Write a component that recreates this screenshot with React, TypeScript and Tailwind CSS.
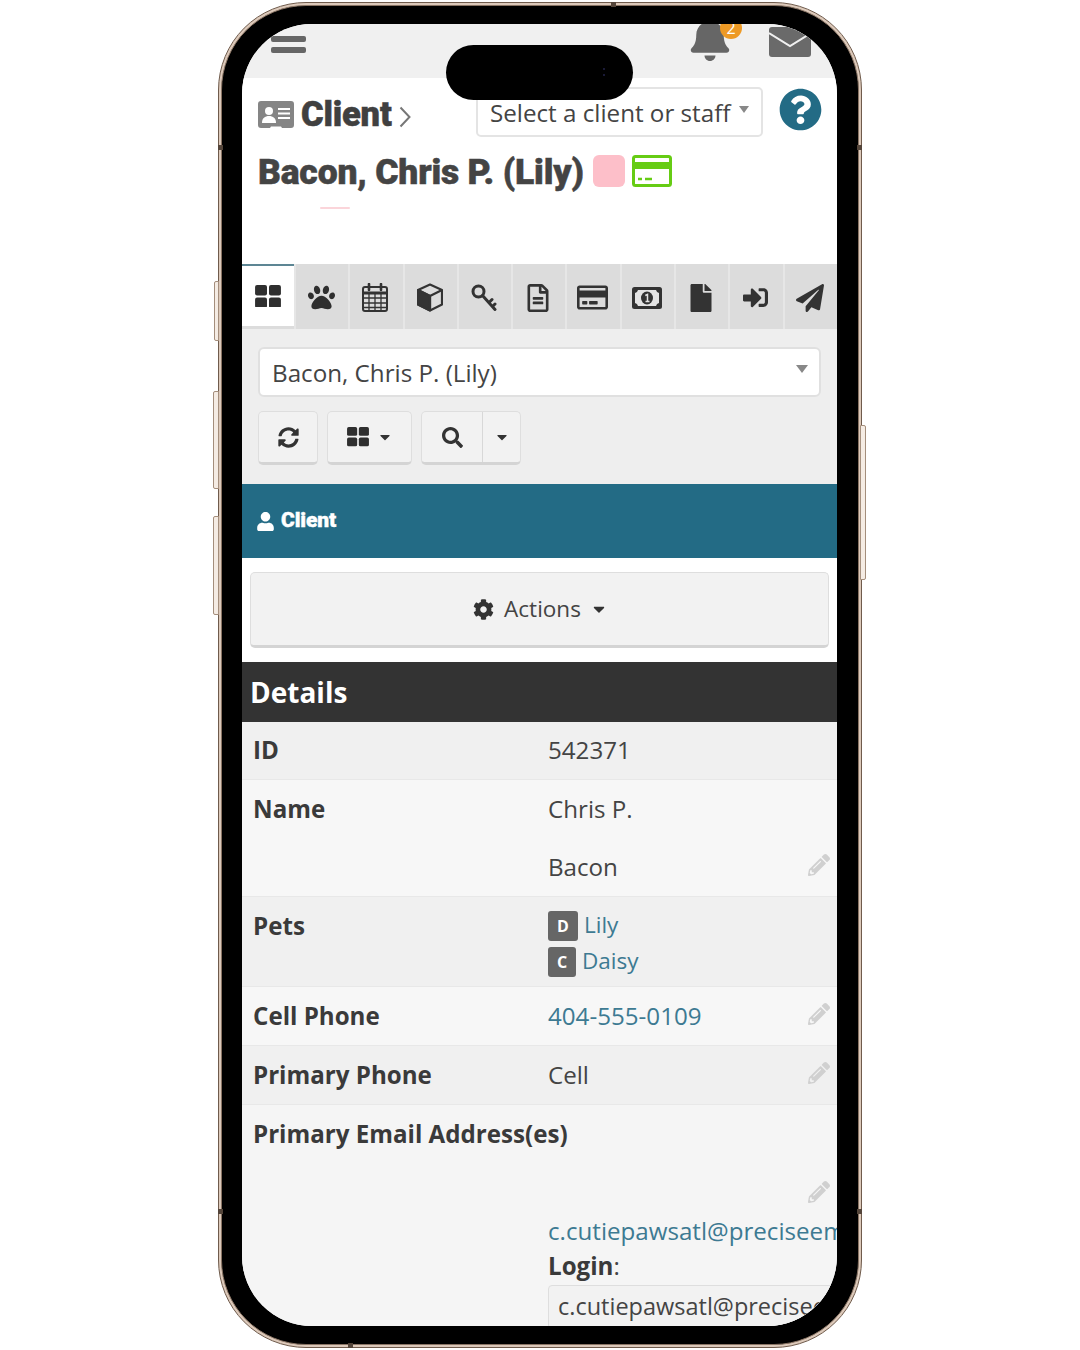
import React from "react";
import {
  FaBell, FaCaretDown, FaCog, FaFile, FaPaperPlane, FaPaw, FaPencilAlt, FaQuestionCircle,
  FaRegCreditCard, FaRegFileAlt, FaSearch, FaSignInAlt, FaSyncAlt, FaUser,
} from "react-icons/fa";

const Grid = ({ s = 26 }: { s?: number }) => (
  <svg width={s} height={s * 0.88} viewBox="0 0 26 23" fill="#2f2f2f">
    <rect x="0" y="0" width="12" height="10.5" rx="2" />
    <rect x="14" y="0" width="12" height="10.5" rx="2" />
    <rect x="0" y="12.5" width="12" height="10.5" rx="2" />
    <rect x="14" y="12.5" width="12" height="10.5" rx="2" />
  </svg>
);

const Calendar = () => (
  <svg width="26" height="29" viewBox="0 0 26 29" fill="none" stroke="#333">
    <rect x="1" y="4" width="24" height="24" rx="2" strokeWidth="2" />
    <path d="M1 10h24" strokeWidth="3" />
    <path d="M1 15h24M1 20h24M1 24.5h24M7 10v18M13 10v18M19 10v18" strokeWidth="1.3" />
    <path d="M7 1v6M19 1v6" strokeWidth="2.6" strokeLinecap="round" />
  </svg>
);

const Cube = () => (
  <svg width="26" height="29" viewBox="0 0 26 29" fill="none" stroke="#333" strokeWidth="2.2" strokeLinejoin="round">
    <path d="M13 1.500 25 7v14.500L13 27.500 1 21.500V7z" />
    <path d="M1 7l12 6 12-6M13 13v14.500" />
    <path d="M1 7l12 6v14.500L1 21.500z" fill="#333" />
  </svg>
);

const KeyIcon = () => (
  <svg width="26" height="27" viewBox="0 0 26 27" fill="none" stroke="#333" strokeWidth="3">
    <circle cx="7.5" cy="7.5" r="5.5" />
    <path d="M11.5 11.500 24 25.500M18 18.500l3-3M21.5 22.500l2.500-2.500" strokeLinecap="round" />
  </svg>
);

const Money = () => (
  <svg width="30" height="22" viewBox="0 0 30 22">
    <rect width="30" height="22" rx="2.500" fill="#333" />
    <path d="M6 3h18a4 4 0 0 0 3 3v10a4 4 0 0 0-3 3H6a4 4 0 0 0-3-3V6a4 4 0 0 0 3-3z" fill="#e4e4e4" />
    <ellipse cx="15" cy="11" rx="6" ry="6.500" fill="#333" />
    <path d="M13.300 8.500 15.500 7.500v7M13.500 14.500h4" fill="none" stroke="#e4e4e4" strokeWidth="1.500" />
  </svg>
);

const ClientCard = () => (
  <svg width="36" height="28" viewBox="0 0 36 28">
    <path d="M3 0h30a3 3 0 0 1 3 3v21a3 3 0 0 1-3 3h-9l-1-1.500H13l-1 1.500H3a3 3 0 0 1-3-3V3a3 3 0 0 1 3-3z" fill="#858585" />
    <circle cx="11" cy="10" r="4" fill="#fff" />
    <path d="M4 22c0-5 3-7 7-7s7 2 7 7z" fill="#fff" />
    <path d="M20 8h12M20 12.500h12M20 17h12" stroke="#fff" strokeWidth="2" />
  </svg>
);

const Chevron = () => (
  <svg width="12" height="22" viewBox="0 0 12 22" fill="none" stroke="#777" strokeWidth="2">
    <path d="M1.500 1.500 10.500 11l-9 9.500" />
  </svg>
);

const Envelope = () => (
  <svg width="42" height="30" viewBox="0 0 42 30">
    <rect width="42" height="30" rx="3" fill="#6a6a6a" />
    <path d="M0 6l21 13L42 6" fill="none" stroke="#f0f0f0" strokeWidth="2" />
  </svg>
);

const GreenCard = () => (
  <svg width="40" height="32" viewBox="0 0 40 32">
    <rect x="1.500" y="1.500" width="37" height="29" rx="2" fill="#fff" stroke="#66cc14" strokeWidth="3" />
    <rect x="1.500" y="7" width="37" height="7" fill="#66cc14" />
    <path d="M6 24h4M13 24h7" stroke="#66cc14" strokeWidth="2.500" />
  </svg>
);

const tabs: React.ReactNode[] = [
  <Grid />,
  <FaPaw size={27} color="#2f2f2f" />,
  <Calendar />,
  <Cube />,
  <KeyIcon />,
  <FaRegFileAlt size={28} color="#333" />,
  <FaRegCreditCard size={31} color="#333" />,
  <Money />,
  <FaFile size={28} color="#333" />,
  <FaSignInAlt size={25} color="#333" />,
  <FaPaperPlane size={28} color="#333" />,
];

const Pencil = () => (
  <span className="ml-auto pr-[7px] mb-[5px] text-[#d0d0d0]">
    <FaPencilAlt size={22} />
  </span>
);

const font = "font-['Open_Sans',sans-serif]";
const heavy = "font-['Roboto',sans-serif] font-black";

const btn = "h-[54px] bg-[#f2f2f2] border border-[#dedede] border-b-[3px] border-b-[#d4d4d4] rounded-[5px] flex items-center justify-center";

export default function App() {
  return (
    <div className={`w-[1080px] h-[1350px] bg-white flex items-center justify-center ${font}`}>
      <div className="relative w-[644px] h-[1346px]">
        {/* side buttons */}
        <span className="absolute left-[-4px] top-[279px] w-[5px] h-[60px] bg-[#f5ece4] border border-[#a48e7c] rounded-l-[2px]" />
        <span className="absolute left-[-5px] top-[389px] w-[6px] h-[98px] bg-[#f5ece4] border border-[#a48e7c] rounded-l-[2px]" />
        <span className="absolute left-[-5px] top-[514px] w-[6px] h-[99px] bg-[#f5ece4] border border-[#a48e7c] rounded-l-[2px]" />
        <span className="absolute right-[-4px] top-[423px] w-[6px] h-[155px] bg-[#f5ece4] border border-[#a48e7c] rounded-r-[2px]" />
        {/* frame */}
        <div className="w-full h-full rounded-[88px] border border-[#6f5b4c] bg-[#dcc9ba] p-[2px]">
          <div className="w-full h-full rounded-[85px] border border-[#8a7565] bg-black pl-[20px] pr-[21px] py-[18px]">
            <div className="relative w-full h-full rounded-[70px] overflow-hidden bg-[#f5f5f5] flex flex-col">
              {/* status strip */}
              <div className="h-[54px] shrink-0 bg-[#f0f0f0] relative overflow-hidden">
                <span className="absolute left-[29px] top-[12px] w-[35px] h-[6px] rounded-[2px] bg-[#666]" />
                <span className="absolute left-[29px] top-[23px] w-[35px] h-[6px] rounded-[2px] bg-[#666]" />
                <span className="absolute left-[446px] top-[-7px] text-[#666]">
                  <FaBell size={44} />
                </span>
                <span className="absolute left-[478px] top-[-7px] w-[22px] h-[22px] rounded-full bg-[#ee9a25] text-white text-[16px] leading-[22px] text-center">2</span>
                <span className="absolute left-[527px] top-[3px]">
                  <Envelope />
                </span>
              </div>

              {/* header */}
              <div className="h-[186px] shrink-0 bg-white flex flex-col">
                <div className="flex items-start pl-[16px] pr-[15px] pt-[9px]">
                  <div className="w-[218px] flex items-center h-[50px] pt-[6px]">
                    <ClientCard />
                    <span className={`${heavy} ml-[7px] text-[34.5px] tracking-[-0.2px] text-[#404040] [-webkit-text-stroke:0.5px_#404040]`}>Client</span>
                    <span className="ml-[7px] flex mt-[3px]">
                      <Chevron />
                    </span>
                  </div>
                  <div className="w-[287px] h-[50px] shrink-0 border-2 border-[#e4e4e4] rounded-[5px] flex items-center pl-[12px] pt-[2px] text-[24.2px] text-[#444]">
                    Select a client or staff
                    <span className="ml-[9px] mb-[8px] w-0 h-0 border-x-[5px] border-x-transparent border-t-[7px] border-t-[#888]" />
                  </div>
                  <span className="ml-auto mt-[1px] text-[#236b85]">
                    <FaQuestionCircle size={43} />
                  </span>
                </div>
                <div className="flex items-center pl-[16px] mt-[17px] h-[34px]">
                  <span className={`${heavy} mt-[3px] text-[35.5px] tracking-[-0.2px] text-[#444] whitespace-nowrap [-webkit-text-stroke:0.5px_#444]`}>Bacon, Chris P. (Lily)</span>
                  <span className="ml-[9px] w-[32px] h-[32px] rounded-[6px] bg-[#fdbfc9]" />
                  <span className="ml-[7px] flex">
                    <GreenCard />
                  </span>
                </div>
                <span className="ml-[78px] mt-[19px] w-[30px] h-[2px] bg-[#fbd5da] rounded-full" />
              </div>

              {/* tabs */}
              <div className="h-[65px] shrink-0 flex bg-[#dcdcdc]">
                {tabs.map((icon, i) => (
                  <div
                    key={i}
                    className={
                      i === 0
                        ? "w-[52px] shrink-0 h-[62px] bg-white border-t-2 border-t-[#5d8694] flex items-center justify-center"
                        : "flex-1 border-l-2 border-l-[#e6e6e6] pt-[2px] flex items-center justify-center pr-[2px]"
                    }
                  >
                    {icon}
                  </div>
                ))}
              </div>

              {/* toolbar panel */}
              <div className="h-[155px] shrink-0 bg-[#eeeeee] px-[16px] pt-[18px]">
                <div className="h-[50px] bg-white border-2 border-[#e0e0e0] rounded-[6px] flex items-center pl-[12px] pr-[11px] pt-[2px] text-[24.2px] text-[#444]">
                  Bacon, Chris P. (Lily)
                  <span className="ml-auto mb-[8px] w-0 h-0 border-x-[6px] border-x-transparent border-t-[8px] border-t-[#888]" />
                </div>
                <div className="flex gap-[9px] mt-[14px]">
                  <div className={`${btn} w-[60px]`}>
                    <FaSyncAlt size={21} color="#333" />
                  </div>
                  <div className={`${btn} w-[85px] gap-[8px]`}>
                    <Grid s={22} />
                    <FaCaretDown size={16} color="#333" />
                  </div>
                  <div className={`${btn} w-[100px]`}>
                    <div className="w-[60px] h-full flex items-center justify-center">
                      <FaSearch size={21} color="#333" />
                    </div>
                    <div className="flex-1 h-full border-l border-l-[#d8d8d8] flex items-center justify-center">
                      <FaCaretDown size={16} color="#333" />
                    </div>
                  </div>
                </div>
              </div>

              {/* teal bar */}
              <div className="h-[74px] shrink-0 bg-[#236b85] flex items-center pl-[14px] text-white">
                <FaUser size={19} />
                <span className={`${heavy} ml-[6px] text-[21px] tracking-[-0.1px] [-webkit-text-stroke:0.4px_#fff]`}>Client</span>
              </div>

              {/* actions */}
              <div className="h-[104px] shrink-0 bg-white px-[8px] pt-[14px]">
                <div className="h-[76px] bg-[#f2f2f2] border border-[#dedede] border-b-[3px] border-b-[#d4d4d4] rounded-[5px] flex items-center justify-center text-[22.5px] text-[#444] pl-[2px]">
                  <FaCog size={21} color="#333" />
                  <span className="ml-[10px]">Actions</span>
                  <span className="ml-[9px]">
                    <FaCaretDown size={18} color="#333" />
                  </span>
                </div>
              </div>

              {/* details header */}
              <div className="h-[60px] shrink-0 bg-[#333] flex items-center pl-[8px] text-[28px] font-bold text-white">Details</div>

              {/* rows */}
              <div className="flex-1 text-[24.15px] text-[#444]">
                <div className="h-[58px] bg-[#f0f0f0] border-b border-b-[#e8e8e8] flex items-center pl-[11px]">
                  <div className="w-[295px] font-bold text-[#3a3a3a]">ID</div>
                  <div>542371</div>
                </div>
                <div className="h-[116px] bg-[#f7f7f7] flex pl-[11px]">
                  <div className="w-[295px] h-[58px] flex items-center font-bold text-[#3a3a3a]">Name</div>
                  <div className="flex-1 flex flex-col">
                    <div className="h-[58px] flex items-center">Chris P.</div>
                    <div className="h-[58px] flex items-center">
                      Bacon
                      <Pencil />
                    </div>
                  </div>
                </div>
                <div className="h-[91px] bg-[#f0f0f0] border-y border-y-[#e8e8e8] flex pl-[11px]">
                  <div className="w-[295px] h-[58px] flex items-center font-bold text-[#3a3a3a]">Pets</div>
                  <div className="pt-[14px] text-[#3d7a92] text-[22.5px]">
                    <div className="flex items-center h-[30px]">
                      <span className="w-[30px] h-[30px] rounded-[3px] bg-[#666] text-white text-[16px] font-bold flex items-center justify-center">D</span>
                      <span className="ml-[6px] mt-[-3px]">Lily</span>
                    </div>
                    <div className="flex items-center h-[30px] mt-[6px]">
                      <span className="w-[28px] h-[30px] rounded-[3px] bg-[#666] text-white text-[16px] font-bold flex items-center justify-center">C</span>
                      <span className="ml-[6px] mt-[-3px]">Daisy</span>
                    </div>
                  </div>
                </div>
                <div className="h-[59px] bg-[#f7f7f7] border-b border-b-[#e8e8e8] flex items-center pl-[11px]">
                  <div className="w-[295px] font-bold text-[#3a3a3a]">Cell Phone</div>
                  <div className="text-[#3d7a92]">404-555-0109</div>
                  <Pencil />
                </div>
                <div className="h-[59px] bg-[#f0f0f0] border-b border-b-[#e8e8e8] flex items-center pl-[11px]">
                  <div className="w-[295px] font-bold text-[#3a3a3a]">Primary Phone</div>
                  <div>Cell</div>
                  <Pencil />
                </div>
                <div className="bg-[#f5f5f5] pl-[11px]">
                  <div className="h-[58px] flex items-center font-bold text-[#3a3a3a]">Primary Email Address(es)</div>
                  <div className="h-[50px] flex items-center pt-[12px]">
                    <Pencil />
                  </div>
                  <div className="pl-[295px] whitespace-nowrap">
                    <div className="text-[#3d7a92] leading-[36px]">c.cutiepawsatl@preciseemail.com</div>
                    <div className="leading-[34px]">
                      <span className="font-bold text-[#3a3a3a]">Login</span>:
                    </div>
                    <div className="mt-[2px] h-[44px] w-[340px] bg-[#f2f2f2] border border-[#dedede] rounded-[4px] pl-[9px] flex items-center text-[23.5px]">c.cutiepawsatl@preciseemail.com</div>
                  </div>
                </div>
              </div>

              {/* dynamic island */}
              <div className="absolute left-[204px] top-[21px] w-[187px] h-[55px] rounded-full bg-black">
                <span className="absolute left-[157px] top-[23px] w-[2px] h-[2px] rounded-full bg-[#23234a]" />
                <span className="absolute left-[157px] top-[29px] w-[2px] h-[2px] rounded-full bg-[#23234a]" />
              </div>
            </div>
          </div>
        </div>
        {/* antenna bands */}
        <span className="absolute left-[393px] top-0 w-[5px] h-[5px] bg-[#54453a]" />
        <span className="absolute left-[130px] bottom-0 w-[5px] h-[5px] bg-[#54453a]" />
        <span className="absolute left-0 top-[143px] w-[5px] h-[5px] bg-[#54453a]" />
        <span className="absolute right-0 top-[143px] w-[5px] h-[5px] bg-[#54453a]" />
        <span className="absolute left-0 top-[1207px] w-[5px] h-[5px] bg-[#54453a]" />
        <span className="absolute right-0 top-[1207px] w-[5px] h-[5px] bg-[#54453a]" />
      </div>
    </div>
  );
}
